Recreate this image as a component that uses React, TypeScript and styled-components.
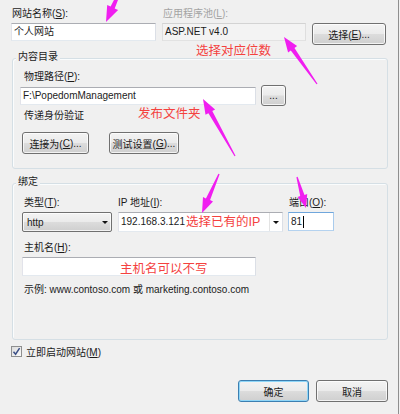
import styled, { createGlobalStyle } from 'styled-components'

const GlobalStyle = createGlobalStyle`
  html, body {
    margin: 0;
    padding: 0;
    background: #f0f0f0;
  }
  body {
    font-family: 'Liberation Sans', 'Noto Sans CJK SC', sans-serif;
    font-size: 10px;
    color: #1b1b1b;
  }
`

const Page = styled.div`
  position: relative;
  box-sizing: border-box;
  width: 399px;
  height: 414px;
  padding: 7px 10px 0 11px;
  border-right: 1px solid #8f8f8f;
  overflow: hidden;
`

const Row = styled.div<{ $gap?: number; $mt?: number; $ml?: number; $end?: boolean; $center?: boolean }>`
  display: flex;
  align-items: ${p => (p.$center ? 'center' : 'flex-start')};
  justify-content: ${p => (p.$end ? 'flex-end' : 'flex-start')};
  gap: ${p => p.$gap || 0}px;
  margin-top: ${p => p.$mt || 0}px;
  margin-left: ${p => p.$ml || 0}px;
`

const Field = styled.div<{ $w: number }>`
  display: flex;
  flex-direction: column;
  width: ${p => p.$w}px;
`

const Label = styled.div<{ $disabled?: boolean; $indent?: number; $mt?: number; $mb?: number }>`
  height: 14px;
  line-height: 14px;
  white-space: nowrap;
  color: ${p => (p.$disabled ? '#a3a3a3' : 'inherit')};
  padding-left: ${p => p.$indent || 0}px;
  margin-top: ${p => p.$mt || 0}px;
  margin-bottom: ${p => (p.$mb === undefined ? 2 : p.$mb)}px;
`

const Key = styled.span`
  text-decoration: underline;
`

const TextBox = styled.div<{ $w?: number; $h?: number; $focus?: boolean; $ml?: number }>`
  box-sizing: border-box;
  width: ${p => (p.$w ? `${p.$w}px` : '100%')};
  height: ${p => p.$h || 18}px;
  margin-left: ${p => p.$ml || 0}px;
  padding: 0 2px;
  line-height: ${p => (p.$h || 18) - 2}px;
  background: #fff;
  border: 1px solid;
  border-color: ${p => (p.$focus ? '#6fa6dc #a9cbec #b4d2ef #a9cbec' : '#abadb3 #dbdfe6 #e3e9ef #e2e3ea')};
  white-space: nowrap;
  display: flex;
  align-items: center;
`

const ReadOnlyBox = styled(TextBox)`
  background: #f3f3f3;
  border-color: #d3d3d3 #dedede #e2e2e2 #dedede;
`

const Caret = styled.span`
  display: inline-block;
  width: 1px;
  height: 12px;
  margin-left: 1px;
  background: #000;
`

const Button = styled.div<{ $w: number; $h?: number; $mt?: number; $default?: boolean }>`
  box-sizing: border-box;
  width: ${p => p.$w}px;
  height: ${p => p.$h || 22}px;
  margin-top: ${p => p.$mt || 0}px;
  display: flex;
  align-items: center;
  justify-content: center;
  border: 1px solid ${p => (p.$default ? '#3c7fb1' : '#707070')};
  border-radius: 3px;
  background: linear-gradient(#f3f3f3 0%, #ebebeb 48%, #dcdcdc 52%, #cfcfcf 100%);
  box-shadow: inset 0 0 0 1px ${p => (p.$default ? '#8fd6f8' : 'rgba(255, 255, 255, 0.75)')};
  white-space: nowrap;
  flex: none;
`

const Group = styled.div<{ $mt: number; $pt: number; $pb: number; $pl: number }>`
  position: relative;
  margin: ${p => p.$mt}px 0 0 1px;
  padding: ${p => p.$pt}px 0 ${p => p.$pb}px ${p => p.$pl}px;
  border: 1px solid #d5dfe5;
  border-radius: 3px;
  box-shadow: inset 1px 1px 0 #fafcfd;
`

const GroupTitle = styled.span`
  position: absolute;
  top: -9px;
  left: 3px;
  padding: 0 2px;
  line-height: 14px;
  background: #f0f0f0;
`

const Arrow = styled.span`
  width: 0;
  height: 0;
  border-left: 3px solid transparent;
  border-right: 3px solid transparent;
  border-top: 3px solid #111;
`

const SelectBox = styled(Button)`
  justify-content: space-between;
  padding: 0 3px 0 4px;
  border-radius: 2px;
`

const Combo = styled(TextBox)`
  padding: 0 0 0 2px;
  justify-content: space-between;
`

const ComboDrop = styled.div`
  align-self: stretch;
  width: 12px;
  border-left: 1px solid #e3e3e3;
  display: flex;
  align-items: center;
  justify-content: center;
`

const CheckRow = styled.div`
  display: flex;
  align-items: center;
  gap: 4px;
  margin-top: 4px;
  height: 14px;
`

const CheckBox = styled.div`
  box-sizing: border-box;
  width: 11px;
  height: 11px;
  border: 1px solid #8e8f8f;
  background: linear-gradient(135deg, #dcdcdc, #fbfbfb);
  display: flex;
  align-items: center;
  justify-content: center;
`

const Note = styled.span<{ $x: number; $y: number }>`
  position: absolute;
  left: ${p => p.$x}px;
  top: ${p => p.$y}px;
  font-size: 12.5px;
  line-height: 16px;
  color: #f4423f;
  white-space: nowrap;
`

const Overlay = styled.svg`
  position: absolute;
  left: 0;
  top: 0;
  pointer-events: none;
`

type Pt = [number, number]

function arrowPoints(tail: Pt, tip: Pt, len = 15, head = 11, shaft = 4.5): string {
  const dx = tip[0] - tail[0]
  const dy = tip[1] - tail[1]
  const l = Math.hypot(dx, dy)
  const ux = dx / l
  const uy = dy / l
  const nx = -uy
  const ny = ux
  const bx = tip[0] - ux * len
  const by = tip[1] - uy * len
  const pts: Pt[] = [
    [tail[0] + nx * 0.6, tail[1] + ny * 0.6],
    [bx + nx * shaft / 2, by + ny * shaft / 2],
    [bx + nx * head / 2, by + ny * head / 2],
    tip,
    [bx - nx * head / 2, by - ny * head / 2],
    [bx - nx * shaft / 2, by - ny * shaft / 2],
    [tail[0] - nx * 0.6, tail[1] - ny * 0.6],
  ]
  return pts.map(p => `${p[0].toFixed(1)},${p[1].toFixed(1)}`).join(' ')
}

const arrows: { tail: Pt; tip: Pt; len?: number; head?: number }[] = [
  { tail: [126, -22], tip: [106, 22], len: 16, head: 12 },
  { tail: [317, 84], tip: [284, 37] },
  { tail: [235, 156], tip: [203, 99] },
  { tail: [219, 174], tip: [202, 213] },
  { tail: [297, 177], tip: [306, 208], len: 13, head: 10 },
]

function App() {
  return (
    <>
      <GlobalStyle />
      <Page>
        <Row>
          <Field $w={145}>
            <Label $indent={1}>网站名称(<Key>S</Key>):</Label>
            <TextBox>个人网站</TextBox>
          </Field>
          <Field $w={144} style={{ marginLeft: 6 }}>
            <Label $indent={1} $disabled>应用程序池(<Key>L</Key>):</Label>
            <ReadOnlyBox>ASP.NET v4.0</ReadOnlyBox>
          </Field>
          <Button $w={74} $mt={16} style={{ marginLeft: 6 }}>选择(<Key>E</Key>)...</Button>
        </Row>

        <Group $mt={13} $pt={11} $pb={14} $pl={7}>
          <GroupTitle>内容目录</GroupTitle>
          <Label $indent={4} $mb={1}>物理路径(<Key>P</Key>):</Label>
          <Row $gap={5} $center>
            <TextBox $w={236}>F:\PopedomManagement</TextBox>
            <Button $w={25} $h={21}>...</Button>
          </Row>
          <Label $indent={4} $mt={3}>传递身份验证</Label>
          <Row $gap={20} $mt={9} $ml={2}>
            <Button $w={67}>连接为(<Key>C</Key>)...</Button>
            <Button $w={70}>测试设置(<Key>G</Key>)...</Button>
          </Row>
        </Group>

        <Group $mt={14} $pt={12} $pb={40} $pl={9}>
          <GroupTitle>绑定</GroupTitle>
          <Row>
            <Field $w={90}>
              <Label $indent={2}>类型(<Key>T</Key>):</Label>
              <SelectBox $w={90} $h={20}>
                http
                <Arrow />
              </SelectBox>
            </Field>
            <Field $w={165} style={{ marginLeft: 6 }}>
              <Label>IP 地址(<Key>I</Key>):</Label>
              <Combo $h={20}>
                192.168.3.121
                <ComboDrop>
                  <Arrow />
                </ComboDrop>
              </Combo>
            </Field>
            <Field $w={46} style={{ marginLeft: 5 }}>
              <Label $indent={1}>端口(<Key>O</Key>):</Label>
              <TextBox $h={19} $focus>
                81
                <Caret />
              </TextBox>
            </Field>
          </Row>
          <Label $indent={2} $mt={9}>主机名(<Key>H</Key>):</Label>
          <TextBox $w={234} $h={19} />
          <Label $indent={2} $mt={7}>示例: www.contoso.com 或 marketing.contoso.com</Label>
        </Group>

        <CheckRow>
          <CheckBox>
            <svg width="9" height="9" viewBox="0 0 9 9">
              <path d="M1.5 4.8 L3.6 7.2 L7.6 1.2" fill="none" stroke="#3b4f86" strokeWidth="1.5" />
            </svg>
          </CheckBox>
          <span>立即启动网站(<Key>M</Key>)</span>
        </CheckRow>

        <Row $end $gap={7} $mt={22}>
          <Button $w={71} $default>确定</Button>
          <Button $w={72}>取消</Button>
        </Row>

        <Note $x={196} $y={43}>选择对应位数</Note>
        <Note $x={138} $y={106}>发布文件夹</Note>
        <Note $x={186} $y={214}>选择已有的IP</Note>
        <Note $x={120} $y={261}>主机名可以不写</Note>

        <Overlay width="400" height="414" viewBox="0 0 400 414">
          {arrows.map((a, i) => (
            <polygon key={i} points={arrowPoints(a.tail, a.tip, a.len, a.head)} fill="#f01ef0" />
          ))}
        </Overlay>
      </Page>
    </>
  )
}

export default App
